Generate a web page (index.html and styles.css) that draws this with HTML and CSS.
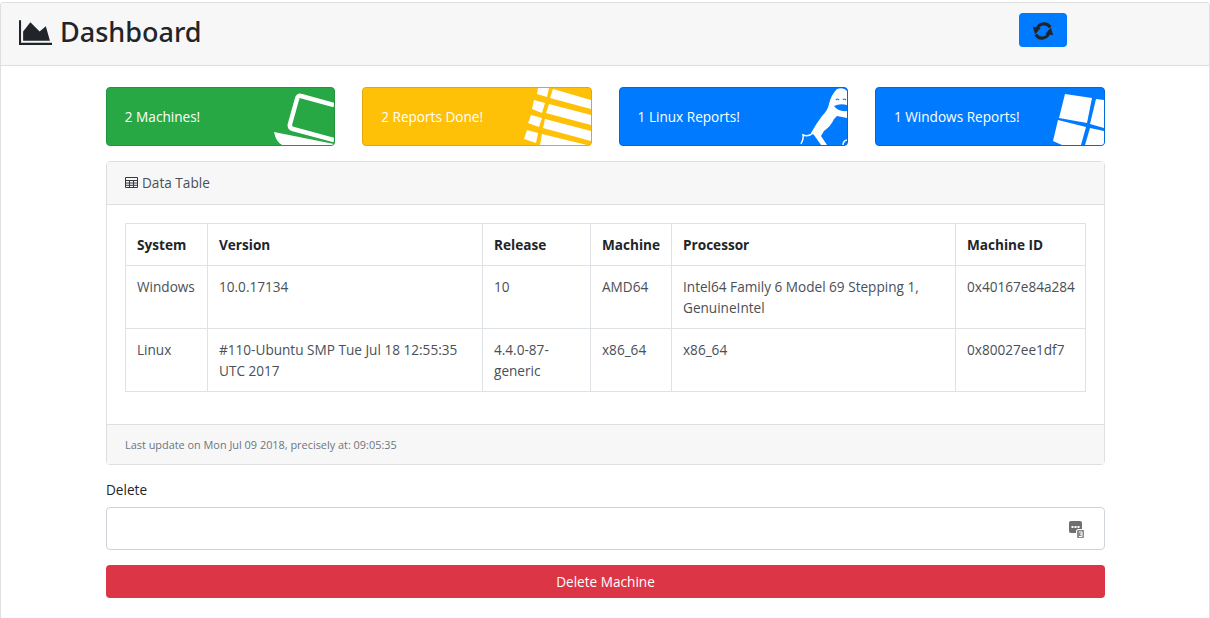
FILE: index.html
```html
<!DOCTYPE html>
<html lang="en">
<head>
<meta charset="utf-8">
<title>Dashboard</title>
<link rel="stylesheet" href="styles.css">
</head>
<body>
<div class="page">
  <header class="topbar">
    <h1 class="title">
      <svg class="title-icon" viewBox="0 0 2048 1792"><path d="M2048 1536v128h-2048v-1536h128v1408h1920zm-384-1024l256 896h-1664v-576l448-576 576 576z"/></svg>
      Dashboard
    </h1>
    <button class="refresh" type="button" aria-label="Refresh">
      <svg viewBox="0 0 20 18">
        <path class="arc" d="M5 8 A6 6 0 0 1 16 6"/>
        <path class="head" d="M1.5 5.5 L8 6.5 L3.5 12 Z"/>
        <path class="arc" d="M15 10 A6 6 0 0 1 4 12"/>
        <path class="head" d="M18.5 12.5 L12 11.5 L16.5 6 Z"/>
      </svg>
    </button>
  </header>

  <main class="content">
    <section class="stats">
      <div class="stat stat-green">
        <span>2 Machines!</span>
        <svg class="stat-icon" viewBox="-10 0 70 57">
          <path class="outline" d="M60 17 L27 8 Q24 7 23 11 L16 36 Q15 40 19 41 L60 52"/>
          <path class="solid" d="M0 44 L60 56 L60 59 L8 57 Q2 54 0 44 Z"/>
        </svg>
      </div>
      <div class="stat stat-yellow">
        <span>2 Reports Done!</span>
        <svg class="stat-icon" viewBox="-10 0 70 57">
          <path class="solid" d="M7 0 L18 0 L16 9 L6 6 Z"/>
          <path class="solid" d="M22 1 L60 12 L60 21 L19 10 Z"/>
          <path class="solid" d="M3 12 L14 15 L11 25 L1 21 Z"/>
          <path class="solid" d="M18 16 L60 27 L60 37 L15 25 Z"/>
          <path class="solid" d="M0 27 L11 30 L8 39 L-3 35 Z"/>
          <path class="solid" d="M14 31 L60 43 L60 53 L12 40 Z"/>
          <path class="solid" d="M-4 42 L7 45 L5 55 L-7 51 Z"/>
          <path class="solid" d="M11 46 L60 58 L9 57 Z"/>
        </svg>
      </div>
      <div class="stat stat-blue">
        <span>1 Linux Reports!</span>
        <svg class="stat-icon" viewBox="-10 0 70 57">
          <path class="solid" d="M50 1 Q57 -1 60 3 L60 30 L50 28 L47 31 Q44 38 37 43 L34 48 L40 57 L34 57 L27 47 L24 45 Q29 36 35 28 Q41 22 42 16 Q44 7 50 1 Z"/>
          <path class="cut" d="M47 18 Q53 15 60 17 L60 23 Q51 24 47 18 Z"/>
          <path class="thin-cut" d="M49 12 Q50 10 52 12 M56 12 Q57 10 59 12"/>
          <path class="thin" d="M14 56 Q17 50 16 47 Q22 49 26 45 M56 57 Q56 53 60 52"/>
        </svg>
      </div>
      <div class="stat stat-blue">
        <span>1 Windows Reports!</span>
        <svg class="stat-icon" viewBox="-10 0 70 57">
          <path class="solid" d="M21 6 L48 10 L43 35 L15 30 Z"/>
          <path class="solid" d="M52 11 L60 12 L60 40 L46 36 Z"/>
          <path class="solid" d="M14 32 L42 39 L37 57 L18 57 L9 53 Z"/>
          <path class="solid" d="M46 40 L60 43 L60 57 L41 57 Z"/>
        </svg>
      </div>
    </section>

    <section class="panel">
      <div class="panel-head">
        <svg class="table-icon" viewBox="0 0 13 11"><path d="M.5.5h12v10H.5zM.5 3.5h12M.5 6h12M.5 8.3h12M4.5 3.5v7M8.5 3.5v7"/></svg>
        Data Table
      </div>
      <div class="panel-body">
        <table class="data">
          <thead>
            <tr>
              <th class="c-system">System</th>
              <th class="c-version">Version</th>
              <th class="c-release">Release</th>
              <th class="c-machine">Machine</th>
              <th class="c-proc">Processor</th>
              <th class="c-id">Machine ID</th>
            </tr>
          </thead>
          <tbody>
            <tr>
              <td>Windows</td>
              <td>10.0.17134</td>
              <td>10</td>
              <td>AMD64</td>
              <td>Intel64 Family 6 Model 69 Stepping 1, GenuineIntel</td>
              <td>0x40167e84a284</td>
            </tr>
            <tr>
              <td>Linux</td>
              <td>#110-Ubuntu SMP Tue Jul 18 12:55:35 UTC 2017</td>
              <td>4.4.0-87-generic</td>
              <td>x86_64</td>
              <td>x86_64</td>
              <td>0x80027ee1df7</td>
            </tr>
          </tbody>
        </table>
      </div>
      <div class="panel-foot">Last update on Mon Jul 09 2018, precisely at: 09:05:35</div>
    </section>

    <form class="delete-form">
      <label class="field-label" for="machine">Delete</label>
      <div class="field">
        <input id="machine" class="field-input" type="text">
        <svg class="field-icon" viewBox="0 0 16 18">
          <rect class="ic-a" x="0" y="0" width="13" height="12" rx="2"/>
          <rect class="ic-d" x="2.5" y="5" width="2" height="2"/>
          <rect class="ic-d" x="5.5" y="5" width="2" height="2"/>
          <rect class="ic-d" x="8.5" y="5" width="2" height="2"/>
          <rect class="ic-b" x="7.5" y="8.5" width="8" height="9" rx="1.5"/>
          <path class="ic-c" d="M10 11h3v4.500h-3M11 13.200h2"/>
        </svg>
      </div>
      <button class="danger" type="button">Delete Machine</button>
    </form>
  </main>
</div>
</body>
</html>
```

FILE: styles.css
```css
* { box-sizing: border-box; }
html, body { margin: 0; height: 100%; overflow: hidden; background: #fff; }
body {
  font-family: "Open Sans", "Noto Sans", sans-serif;
  font-size: 13.6px;
  line-height: 21px;
  color: #212529;
}
.page {
  margin-top: 2px;
  height: 616px;
  border: 1px solid #dfdfdf;
  border-bottom: 0;
  border-radius: 4px 4px 0 0;
  overflow: hidden;
}
.topbar {
  display: flex;
  align-items: flex-start;
  height: 63px;
  padding: 10px 0 0 18px;
  background: #f7f7f7;
  border-bottom: 1px solid #dfdfdf;
}
.title {
  flex: 0 0 1000px;
  display: flex;
  align-items: center;
  gap: 8px;
  margin: 0;
  height: 38px;
  font-family: "Noto Sans", sans-serif;
  font-size: 27px;
  font-weight: 500;
  line-height: 38px;
}
.title-icon { width: 33px; height: 29px; fill: #212529; }
.refresh {
  width: 48px;
  height: 34px;
  padding: 0;
  display: flex;
  align-items: center;
  justify-content: center;
  background: #007bff;
  border: 0;
  border-radius: 4px;
}
.refresh svg { width: 24px; height: 22px; margin-top: 2px; }
.arc { fill: none; stroke: #212529; stroke-width: 2.6; }
.head { fill: #212529; }
.content { padding: 21px 104px 0 105px; }
.stats {
  display: grid;
  grid-template-columns: repeat(4, 229.6px);
  column-gap: 26.8px;
  margin: 0 0 15px -0.2px;
}
.stat {
  position: relative;
  display: flex;
  align-items: center;
  height: 59px;
  padding: 0 18px;
  color: #fff;
  border: 1px solid;
  border-radius: 4px;
  overflow: hidden;
}
.stat-icon { position: absolute; right: 0; top: 0; width: 70px; height: 57px; }
.stat-green { background: #28a745; border-color: #23963d; }
.stat-yellow { background: #ffc107; border-color: #e0aa0c; }
.stat-blue { background: #007bff; border-color: #0069d9; }
.solid { fill: #fff; }
.outline { fill: none; stroke: #fff; stroke-width: 4.500; stroke-linejoin: round; }
.thin { fill: none; stroke: #fff; stroke-width: 1.5; }
.thin-cut { fill: none; stroke: #007bff; stroke-width: 1.2; }
.cut { fill: #007bff; }
.panel {
  border: 1px solid #dfdfdf;
  border-radius: 4px;
  margin-bottom: 15px;
}
.panel-head {
  display: flex;
  align-items: center;
  gap: 4px;
  height: 43px;
  padding: 0 18px 2px;
  background: #f7f7f7;
  border-bottom: 1px solid #dfdfdf;
  color: #495057;
}
.table-icon { width: 13px; height: 11px; fill: none; stroke: #343a40; stroke-width: 1; }
.panel-body { padding: 18px 18px 32px; }
.data {
  width: 960px;
  table-layout: fixed;
  border-collapse: collapse;
  color: #495057;
}
.data th, .data td {
  border: 1px solid #dee2e6;
  padding: 10px 11px;
  vertical-align: top;
  text-align: left;
}
.data th { color: #212529; font-weight: 700; }
.c-system { width: 82px; }
.c-version { width: 275px; }
.c-release { width: 108px; }
.c-machine { width: 81px; }
.c-proc { width: 284px; }
.c-id { width: 130px; }
.panel-foot {
  display: flex;
  align-items: center;
  height: 40px;
  padding: 0 18px;
  background: #f7f7f7;
  border-top: 1px solid #dfdfdf;
  font-size: 10.9px;
  color: #6c757d;
}
.delete-form { display: block; }
.field-label { display: block; line-height: 19px; margin-bottom: 8px; }
.field { position: relative; margin-bottom: 15px; }
.field-input {
  display: block;
  width: 100%;
  height: 43px;
  background: #fff;
  border: 1px solid #ced4da;
  border-radius: 4px;
}
.field-icon { position: absolute; right: 20px; top: 14px; width: 16px; height: 18px; }
.ic-a { fill: #6f6f6f; }
.ic-b { fill: #8a8a8a; stroke: #fff; stroke-width: 1; }
.ic-c { fill: none; stroke: #fff; stroke-width: 1; }
.ic-d { fill: #fff; }
.danger {
  display: block;
  width: 100%;
  height: 33px;
  padding: 0;
  font: inherit;
  color: #fff;
  background: #dc3545;
  border: 0;
  border-radius: 4px;
}
```
